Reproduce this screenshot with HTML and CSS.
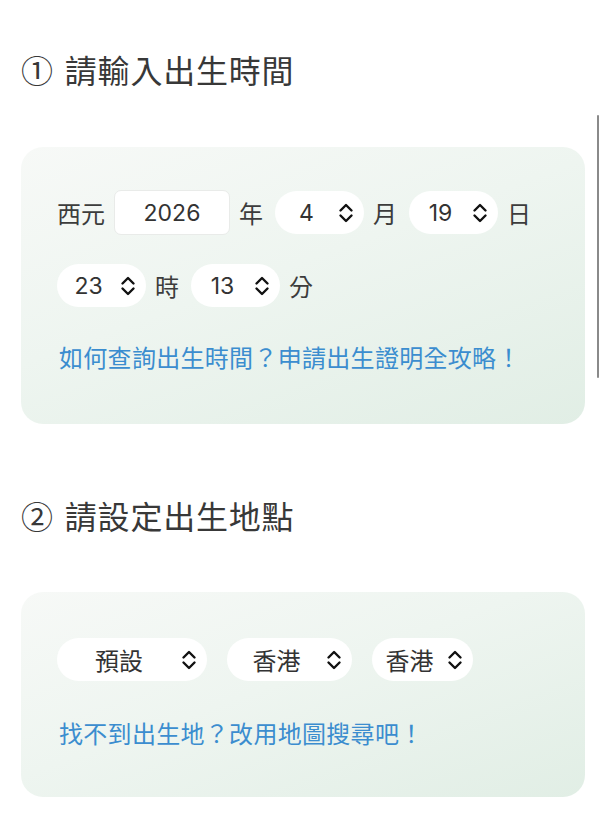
FILE: index.html
```html
<!DOCTYPE html>
<html lang="zh-Hant">
<head>
    <meta charset="UTF-8">
    <title>出生資料</title>
    <link rel="stylesheet" href="styles.css">
</head>
<body>
    <div class="page">
        <h2 class="step step-time"><span class="num">①</span>請輸入出生時間</h2>
        <div class="card card-time">
            <div class="row">
                <span class="label">西元</span>
                <div class="year-box">2026</div>
                <span class="label label-gap">年</span>
                <div class="pick pick-num"><span class="val">4</span><svg class="chev" viewBox="0 0 16 20"><path d="M2.5 7.5 L8 2 L13.5 7.5 M2.5 12.5 L8 18 L13.5 12.5"/></svg></div>
                <span class="label label-gap">月</span>
                <div class="pick pick-num"><span class="val">19</span><svg class="chev" viewBox="0 0 16 20"><path d="M2.5 7.5 L8 2 L13.5 7.5 M2.5 12.5 L8 18 L13.5 12.5"/></svg></div>
                <span class="label">日</span>
            </div>
            <div class="row row-2">
                <div class="pick pick-num"><span class="val">23</span><svg class="chev" viewBox="0 0 16 20"><path d="M2.5 7.5 L8 2 L13.5 7.5 M2.5 12.5 L8 18 L13.5 12.5"/></svg></div>
                <span class="label label-gap">時</span>
                <div class="pick pick-num"><span class="val">13</span><svg class="chev" viewBox="0 0 16 20"><path d="M2.5 7.5 L8 2 L13.5 7.5 M2.5 12.5 L8 18 L13.5 12.5"/></svg></div>
                <span class="label">分</span>
            </div>
            <a class="tip" href="#">如何查詢出生時間？申請出生證明全攻略！</a>
        </div>

        <h2 class="step step-place"><span class="num">②</span>請設定出生地點</h2>
        <div class="card card-place">
            <div class="row row-place">
                <div class="pick pick-wide"><span class="val">預設</span><svg class="chev" viewBox="0 0 16 20"><path d="M2.5 7.5 L8 2 L13.5 7.5 M2.5 12.5 L8 18 L13.5 12.5"/></svg></div>
                <div class="pick pick-mid"><span class="val">香港</span><svg class="chev" viewBox="0 0 16 20"><path d="M2.5 7.5 L8 2 L13.5 7.5 M2.5 12.5 L8 18 L13.5 12.5"/></svg></div>
                <div class="pick pick-small"><span class="val">香港</span><svg class="chev" viewBox="0 0 16 20"><path d="M2.5 7.5 L8 2 L13.5 7.5 M2.5 12.5 L8 18 L13.5 12.5"/></svg></div>
            </div>
            <a class="tip" href="#">找不到出生地？改用地圖搜尋吧！</a>
        </div>
    </div>
    <div class="scroll-ind"></div>
</body>
</html>
```

FILE: styles.css
```css
body{
    margin: 0;
    background: #fff;
    font-family: "Inter", "Noto Sans CJK TC", sans-serif;
    color: #3a3a3a;
}
.page{
    padding: 0 15px 0 21px;
}
.step{
    margin: 0;
    font-size: 32px;
    line-height: 40px;
    font-weight: 400;
    letter-spacing: 0.8px;
    color: #383838;
    font-family: "Noto Sans CJK TC", sans-serif;
}
.step .num{
    margin-right: 11px;
}
.step-time{
    padding-top: 49px;
    margin-bottom: 58px;
}
.step-place{
    margin-top: 71px;
    margin-bottom: 57px;
}
.card{
    border-radius: 22px;
    background: linear-gradient(160deg, #f7f9f7 0%, #eef5f0 45%, #e1eee5 100%);
    padding: 0 36px;
}
.card-time{
    height: 277px;
    padding-top: 43px;
    box-sizing: border-box;
}
.card-place{
    height: 205px;
    padding-top: 46px;
    box-sizing: border-box;
}
.row{
    display: flex;
    align-items: center;
    gap: 9px;
    height: 45px;
}
.row-2{
    margin-top: 29px;
    height: 43px;
}
.row-place{
    gap: 20px;
    height: 43px;
}
.label{
    font-family: "Noto Sans CJK TC", sans-serif;
    font-size: 24px;
    color: #3c3c3c;
}
.label-gap{
    margin-right: 3px;
}
.year-box{
    width: 114px;
    height: 43px;
    border: 1px solid #e9ebe9;
    border-radius: 7px;
    background: #fff;
    display: flex;
    align-items: center;
    justify-content: center;
    font-size: 23px;
    color: #333;
}
.pick{
    height: 43px;
    border-radius: 22px;
    background: #fff;
    display: flex;
    align-items: center;
    padding-right: 10px;
    box-sizing: border-box;
}
.pick .val{
    flex: 1;
    text-align: center;
    font-size: 23px;
    color: #333;
}
.pick-num{
    width: 89px;
}
.pick-wide{
    width: 150px;
}
.pick-mid{
    width: 125px;
}
.pick-small{
    width: 101px;
}
.pick-wide .val,.pick-mid .val,.pick-small .val{
    font-family: "Noto Sans CJK TC", sans-serif;
    font-size: 24px;
}
.chev{
    width: 16px;
    height: 20px;
    fill: none;
    stroke: #111;
    stroke-width: 2.4;
    stroke-linecap: round;
    stroke-linejoin: round;
}
.tip{
    display: block;
    margin-top: 35px;
    margin-left: 2px;
    line-height: 30px;
    font-size: 24px;
    letter-spacing: 0.3px;
    color: #3b8dcf;
    text-decoration: none;
    font-family: "Noto Sans CJK TC", sans-serif;
}
.card-place .tip{
    margin-top: 37px;
}
.scroll-ind{     /*右側捲動條*/
    position: absolute;
    top: 115px;
    right: 1px;
    width: 2px;
    height: 263px;
    border-radius: 1px;
    background: #8a8a8a;
}
```
